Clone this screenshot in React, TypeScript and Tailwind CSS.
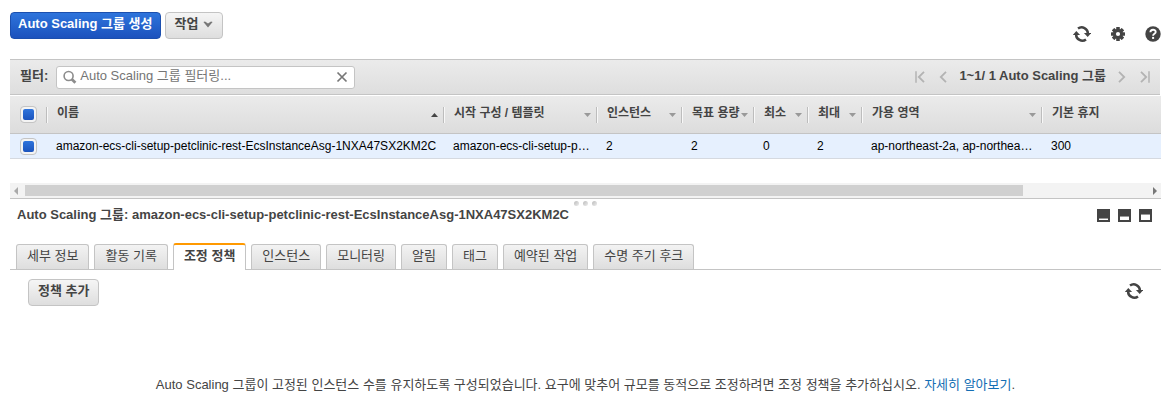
import React, { useState } from "react";

const RAISED =
  "h-[27px] rounded border border-[#c4c4c4] bg-linear-to-b from-[#f5f5f5] to-[#dedede] pb-[3px] text-[13px] leading-4 font-bold text-[#444]";
const ICON_BUTTON = "flex shrink-0 items-center justify-center text-[#444]";

const columns = [
  { label: "이름", width: "w-[397px]", sort: "up" },
  { label: "시작 구성 / 템플릿", width: "w-[153px]", sort: "down" },
  { label: "인스턴스", width: "w-[85px]", sort: "down" },
  { label: "목표 용량", width: "w-[72px]", sort: "down" },
  { label: "최소", width: "w-[54px]", sort: "down" },
  { label: "최대", width: "w-[54px]", sort: "down" },
  { label: "가용 영역", width: "w-[180px]", sort: "down" },
  { label: "기본 휴지", width: "", sort: "" },
];

const groupName = "amazon-ecs-cli-setup-petclinic-rest-EcsInstanceAsg-1NXA47SX2KM2C";

const row = [
  groupName,
  "amazon-ecs-cli-setup-p…",
  "2",
  "2",
  "0",
  "2",
  "ap-northeast-2a, ap-northea…",
  "300",
];

const tabs = [
  "세부 정보",
  "활동 기록",
  "조정 정책",
  "인스턴스",
  "모니터링",
  "알림",
  "태그",
  "예약된 작업",
  "수명 주기 후크",
];

function RefreshIcon() {
  return (
    <svg width="18" height="16" viewBox="0 0 18 16" fill="none" aria-hidden="true">
      <path d="M5 2.6A6.2 6.2 0 0 1 14.9 7.6" stroke="currentColor" strokeWidth="2.5" />
      <path d="M13 13.4A6.2 6.2 0 0 1 3.1 8.4" stroke="currentColor" strokeWidth="2.5" />
      <path d="M10.9 7H18.3L14.7 11Z" fill="currentColor" />
      <path d="M7.1 9H-0.3L3.3 5Z" fill="currentColor" />
    </svg>
  );
}

function GearIcon() {
  return (
    <svg width="14" height="14" viewBox="0 0 14 14" aria-hidden="true">
      <g fill="currentColor">
        <rect x="5.2" y="0" width="3.6" height="14" rx="0.5" />
        <rect x="5.2" y="0" width="3.6" height="14" rx="0.5" transform="rotate(45 7 7)" />
        <rect x="5.2" y="0" width="3.6" height="14" rx="0.5" transform="rotate(90 7 7)" />
        <rect x="5.2" y="0" width="3.6" height="14" rx="0.5" transform="rotate(135 7 7)" />
        <circle cx="7" cy="7" r="4.9" />
      </g>
      <circle cx="7" cy="7" r="2.1" fill="white" />
    </svg>
  );
}

function HelpIcon() {
  return (
    <svg width="16" height="16" viewBox="0 0 16 16" fill="none" aria-hidden="true">
      <circle cx="8" cy="8" r="7.7" fill="currentColor" />
      <path
        d="M5.4 6.3C5.4 3 10.7 3 10.7 6.1C10.7 7.9 8.1 7.8 8.1 9.8"
        stroke="white"
        strokeWidth="1.9"
      />
      <rect x="7.1" y="10.9" width="2" height="2" fill="white" />
    </svg>
  );
}

function SearchIcon() {
  return (
    <svg width="14" height="14" viewBox="0 0 14 14" fill="none" stroke="#8c8c8c" aria-hidden="true">
      <circle cx="5.6" cy="6" r="4.5" strokeWidth="1.6" />
      <path d="M8.8 9.2L12.4 12.8" strokeWidth="2.8" />
    </svg>
  );
}

function PagerIcon({ back, bar }: { back?: boolean; bar?: boolean }) {
  return (
    <svg
      width="10"
      height="12"
      viewBox="0 0 10 12"
      fill="none"
      stroke="#b3b3b3"
      strokeWidth="1.8"
      className={back ? "rotate-180" : ""}
      aria-hidden="true"
    >
      <path d="M1 0.8L6.2 6L1 11.2" />
      {bar && <path d="M9 0.3V11.7" strokeWidth="1.5" />}
    </svg>
  );
}

function PaneIcon({ top }: { top: number }) {
  return (
    <svg width="13" height="13" viewBox="0 0 13 13" aria-hidden="true">
      <rect width="13" height="13" fill="#444" />
      <rect x="2" y={top} width="9" height={11 - top} fill="white" />
      <rect x="2" y={top - 1} width="9" height="1" fill="#999" />
    </svg>
  );
}

function SortIcon({ dir }: { dir: string }) {
  return (
    <svg width="7" height="4" viewBox="0 0 7 4" className="shrink-0" aria-hidden="true">
      {dir === "up" ? (
        <path d="M0 4L3.5 0L7 4Z" fill="#444" />
      ) : (
        <path d="M0 0H7L3.5 4Z" fill="#999" />
      )}
    </svg>
  );
}

function Tick({ label }: { label: string }) {
  const [on, setOn] = useState(true);
  return (
    <input
      type="checkbox"
      aria-label={label}
      checked={on}
      onChange={() => setOn(!on)}
      className="block size-[17px] appearance-none rounded border border-[#c4c4c4] bg-[#f4f4f4] bg-clip-padding p-px before:block before:size-full before:rounded-[3px] before:border before:border-[#f4f4f4] checked:before:bg-linear-to-b checked:before:from-[#2f74dc] checked:before:to-[#1c54bd]"
    />
  );
}

export default function App() {
  const [query, setQuery] = useState("");
  const [active, setActive] = useState("조정 정책");

  return (
    <main className="bg-white pr-[6px] pl-[10px] font-['Liberation_Sans','Noto_Sans_CJK_KR',sans-serif] text-[13px] leading-4 text-[#444]">
      <div className="flex items-start pt-3 pb-[17px]">
        <button className="h-[27px] rounded border border-[#1b4fae] bg-linear-to-b from-[#2e74dc] to-[#1c52bd] px-[7px] pb-[3px] text-[13px] leading-4 font-bold text-white">
          Auto Scaling 그룹 생성
        </button>
        <button className={`${RAISED} ml-1 flex items-center gap-[5px] px-[9px]`}>
          작업
          <svg width="10" height="7" viewBox="0 0 10 7" aria-hidden="true">
            <path d="M0.4 1L2 0.4L5 2.6L8 0.4L9.6 1L5 6.6Z" fill="#777" />
          </svg>
        </button>
        <div className="ml-auto flex items-center gap-5 pt-[14px]">
          <button aria-label="새로 고침" className={ICON_BUTTON}>
            <RefreshIcon />
          </button>
          <button aria-label="설정" className={ICON_BUTTON}>
            <GearIcon />
          </button>
          <button aria-label="도움말" className={ICON_BUTTON}>
            <HelpIcon />
          </button>
        </div>
      </div>

      <div className="mr-px flex h-9 items-center border-y border-[#c4c4c4] bg-linear-to-b from-[#ebebeb] to-[#dedede] pr-[10px] pl-[10px]">
        <label htmlFor="filter" className="pb-[2px] font-bold">
          필터:
        </label>
        <div className="ml-2 flex h-[23px] w-[299px] items-center rounded-[3px] border border-[#c4c4c4] bg-white px-[6px]">
          <SearchIcon />
          <input
            id="filter"
            value={query}
            onChange={(e) => setQuery(e.target.value)}
            placeholder="Auto Scaling 그룹 필터링..."
            className="ml-[3px] min-w-0 flex-1 pb-[2px] text-[13px] leading-4 outline-none placeholder:text-[#757575]"
          />
          <button aria-label="지우기" onClick={() => setQuery("")}>
            <svg width="12" height="12" viewBox="0 0 12 12" stroke="#777" strokeWidth="1.7" aria-hidden="true">
              <path d="M1.5 1.5L10.5 10.5M10.5 1.5L1.5 10.5" />
            </svg>
          </button>
        </div>
        <nav aria-label="페이지" className="ml-auto flex items-center gap-3">
          <button aria-label="처음">
            <PagerIcon back bar />
          </button>
          <button aria-label="이전">
            <PagerIcon back />
          </button>
          <span className="pb-[2px] font-bold whitespace-nowrap">1~1/ 1 Auto Scaling 그룹</span>
          <button aria-label="다음">
            <PagerIcon />
          </button>
          <button aria-label="마지막">
            <PagerIcon bar />
          </button>
        </nav>
      </div>

      <div className="mt-px overflow-hidden pb-6">
        <table className="w-full table-fixed border-separate border-spacing-0 text-left text-[12px] leading-4">
          <thead className="bg-linear-to-b from-[#ebebeb] to-[#dcdcdc]">
            <tr className="h-[38px]">
              <th className="w-9 border-b border-[#c4c4c4] p-0 pl-[10px]">
                <Tick label="모두 선택" />
              </th>
              {columns.map((c) => (
                <th key={c.label} className={`${c.width} border-b border-[#c4c4c4] p-0 font-bold`}>
                  <div className="flex h-4 items-center justify-between border-l border-[#bdbdbd] pr-[5px] pl-[10px] shadow-[inset_1px_0_#f8f8f8]">
                    <span className="pb-1 whitespace-nowrap">{c.label}</span>
                    {c.sort && <SortIcon dir={c.sort} />}
                  </div>
                </th>
              ))}
            </tr>
          </thead>
          <tbody>
            <tr className="h-[25px] bg-[#e6f0fe] text-black">
              <td className="border-b border-[#d5d9e0] p-0 pl-[10px]">
                <Tick label={groupName} />
              </td>
              {row.map((cell, i) => (
                <td key={i} className="truncate border-b border-[#d5d9e0] p-0 pb-px pl-[10px]">
                  {cell}
                </td>
              ))}
            </tr>
          </tbody>
        </table>
      </div>

      <div className="flex h-4 items-center border-b border-[#c4c4c4] bg-[#f3f3f3] px-1">
        <svg width="4" height="8" viewBox="0 0 4 8" aria-hidden="true">
          <path d="M4 0V8L0 4Z" fill="#aaa" />
        </svg>
        <div className="mx-[7px] flex-1">
          <div className="h-[11px] w-[89%] bg-[#d0d0d0]" />
        </div>
        <svg width="4" height="8" viewBox="0 0 4 8" aria-hidden="true">
          <path d="M0 0V8L4 4Z" fill="#777" />
        </svg>
      </div>

      <div className="flex h-2 items-center justify-center gap-1">
        {[0, 1, 2].map((n) => (
          <span key={n} className="size-[5px] rounded-full bg-linear-to-br from-[#bbb] to-[#eee]" />
        ))}
      </div>

      <section>
        <header className="flex items-center justify-between pr-[9px] pl-[7px]">
          <h2 className="font-bold">Auto Scaling 그룹: {groupName}</h2>
          <div className="flex gap-2">
            <button aria-label="최소화">
              <PaneIcon top={10} />
            </button>
            <button aria-label="절반 보기">
              <PaneIcon top={8} />
            </button>
            <button aria-label="최대화">
              <PaneIcon top={6} />
            </button>
          </div>
        </header>

        <div role="tablist" className="mt-5 flex h-[27px] items-end gap-[5px] border-b border-[#c4c4c4] pl-[6px]">
          {tabs.map((t) => (
            <button
              key={t}
              role="tab"
              aria-selected={t === active}
              onClick={() => setActive(t)}
              className={
                t === active
                  ? "-mb-px h-[27px] rounded-t-[3px] border-x border-t-2 border-x-[#c4c4c4] border-t-[#f90] bg-white px-[10px] pb-[3px] font-bold whitespace-nowrap"
                  : "h-[25px] rounded-t-[3px] border border-b-0 border-[#c4c4c4] bg-linear-to-b from-[#f3f3f3] to-[#dedede] px-[10px] pb-[3px] whitespace-nowrap"
              }
            >
              {t}
            </button>
          ))}
        </div>

        <div role="tabpanel">
          <div className="flex items-start justify-between pt-[9px] pr-[18px] pl-[18px]">
            <button className={`${RAISED} px-[9px]`}>정책 추가</button>
            <button aria-label="정책 새로 고침" className={`${ICON_BUTTON} pt-1`}>
              <RefreshIcon />
            </button>
          </div>
          <p className="mt-[71px] text-center">
            Auto Scaling 그룹이 고정된 인스턴스 수를 유지하도록 구성되었습니다. 요구에 맞추어 규모를
            동적으로 조정하려면 조정 정책을 추가하십시오.{" "}
            <a href="#learn-more" className="text-[#146eb4]">
              자세히 알아보기
            </a>
            .
          </p>
        </div>
      </section>
    </main>
  );
}
